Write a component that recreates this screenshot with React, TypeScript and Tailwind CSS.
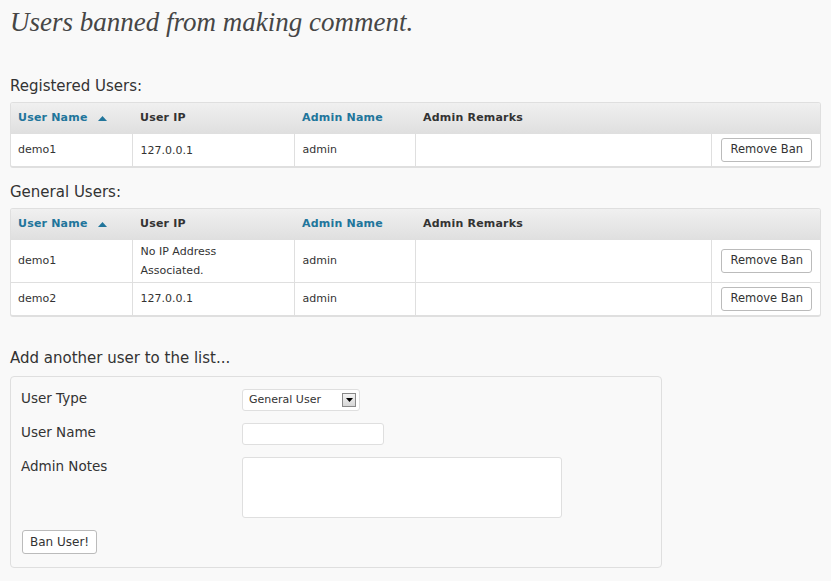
import React from "react";

const font = { fontFamily: '"DejaVu Sans", Verdana, sans-serif' };

function SortArrow() {
  return (
    <svg width="9" height="5" viewBox="0 0 9 5" className="ml-[10px] inline-block">
      <polygon points="0,5 9,5 4.5,0" fill="#21759b" />
    </svg>
  );
}

function Btn({ children, className = "" }: { children: React.ReactNode; className?: string }) {
  return (
    <button
      className={
        "h-[24px] rounded-[3px] border border-[#bbb] bg-white text-[11.5px] leading-none text-[#333] " +
        className
      }
    >
      {children}
    </button>
  );
}

type Row = { name: string; ip: React.ReactNode; admin: string; h: string };

function UsersTable({ rows }: { rows: Row[] }) {
  return (
    <div className="overflow-hidden rounded-[3px] border border-[#dfdfdf] border-b-[2px] bg-white">
      <table className="w-full table-fixed border-collapse text-[11px] text-[#333]">
        <colgroup>
          <col className="w-[121px]" />
          <col className="w-[162px]" />
          <col className="w-[121px]" />
          <col className="w-[296px]" />
          <col />
        </colgroup>
        <thead>
          <tr className="h-[31px] bg-gradient-to-b from-[#f0f0f0] to-[#dfdfdf] text-left font-bold tracking-[0.2px]">
            <th className="px-[7px] text-[#21759b]">
              User Name
              <SortArrow />
            </th>
            <th className="px-[8px] text-[#333]">User IP</th>
            <th className="px-[8px] text-[#21759b]">Admin Name</th>
            <th className="px-[8px] text-[#333]">Admin Remarks</th>
            <th></th>
          </tr>
        </thead>
        <tbody>
          {rows.map((r, i) => (
            <tr key={i} className={(i > 0 ? "border-t border-[#dfdfdf] " : "") + r.h}>
              <td className="border-r border-[#dfdfdf] px-[7px] align-middle">{r.name}</td>
              <td className="border-r border-[#dfdfdf] px-[8px] align-middle leading-[19px]">{r.ip}</td>
              <td className="border-r border-[#dfdfdf] px-[8px] align-middle">{r.admin}</td>
              <td className="border-r border-[#dfdfdf] px-[8px] align-middle"></td>
              <td className="pr-[8px] text-right align-middle">
                <Btn className="px-[8px]">Remove Ban</Btn>
              </td>
            </tr>
          ))}
        </tbody>
      </table>
    </div>
  );
}

export default function App() {
  return (
    <div className="min-h-[581px] bg-[#f9f9f9] px-[10px] pt-[6px] pb-[13px] text-[#333]" style={font}>
      <h1
        className="text-[27px] leading-[32px] italic text-[#464646]"
        style={{ fontFamily: 'Georgia, "Liberation Serif", serif' }}
      >
        Users banned from making comment.
      </h1>

      <h3 className="mt-[38px] text-[15px] leading-[20px] text-[#333]">Registered Users:</h3>
      <div className="mt-[6px]">
        <UsersTable rows={[{ name: "demo1", ip: "127.0.0.1", admin: "admin", h: "h-[32px]" }]} />
      </div>

      <h3 className="mt-[14px] text-[15px] leading-[20px] text-[#333]">General Users:</h3>
      <div className="mt-[6px]">
        <UsersTable
          rows={[
            {
              name: "demo1",
              ip: (
                <>
                  No IP Address
                  <br />
                  Associated.
                </>
              ),
              admin: "admin",
              h: "h-[42px]",
            },
            { name: "demo2", ip: "127.0.0.1", admin: "admin", h: "h-[33px]" },
          ]}
        />
      </div>

      <h3 className="mt-[31px] text-[15px] leading-[20px] text-[#333]">Add another user to the list...</h3>
      <div className="mt-[8px] w-[652px] rounded-[4px] border border-[#dfdfdf] px-[10px] pt-[12px] pb-[13px]">
        <div className="flex items-start">
          <label className="w-[221px] pt-[1px] text-[13.5px] leading-[16px]">User Type</label>
          <div className="flex h-[22px] w-[118px] items-center justify-between rounded-[3px] border border-[#dfdfdf] bg-white pl-[6px] pr-[3px] text-[11px]">
            <span>General User</span>
            <span className="flex h-[14px] w-[14px] items-center justify-center border border-[#888] bg-gradient-to-b from-[#f4f4f4] to-[#d6d6d6]">
              <svg width="7" height="4" viewBox="0 0 7 4">
                <polygon points="0,0 7,0 3.5,4" fill="#000" />
              </svg>
            </span>
          </div>
        </div>
        <div className="mt-[12px] flex items-start">
          <label className="w-[221px] pt-[1px] text-[13.5px] leading-[16px]">User Name</label>
          <div className="h-[22px] w-[142px] rounded-[3px] border border-[#dfdfdf] bg-white"></div>
        </div>
        <div className="mt-[12px] flex items-start">
          <label className="w-[221px] pt-[1px] text-[13.5px] leading-[16px]">Admin Notes</label>
          <div className="h-[61px] w-[320px] rounded-[3px] border border-[#dfdfdf] bg-white"></div>
        </div>
        <div className="mt-[11px] pl-[1px]">
          <Btn className="px-[7px] text-[12px]">Ban User!</Btn>
        </div>
      </div>
    </div>
  );
}
